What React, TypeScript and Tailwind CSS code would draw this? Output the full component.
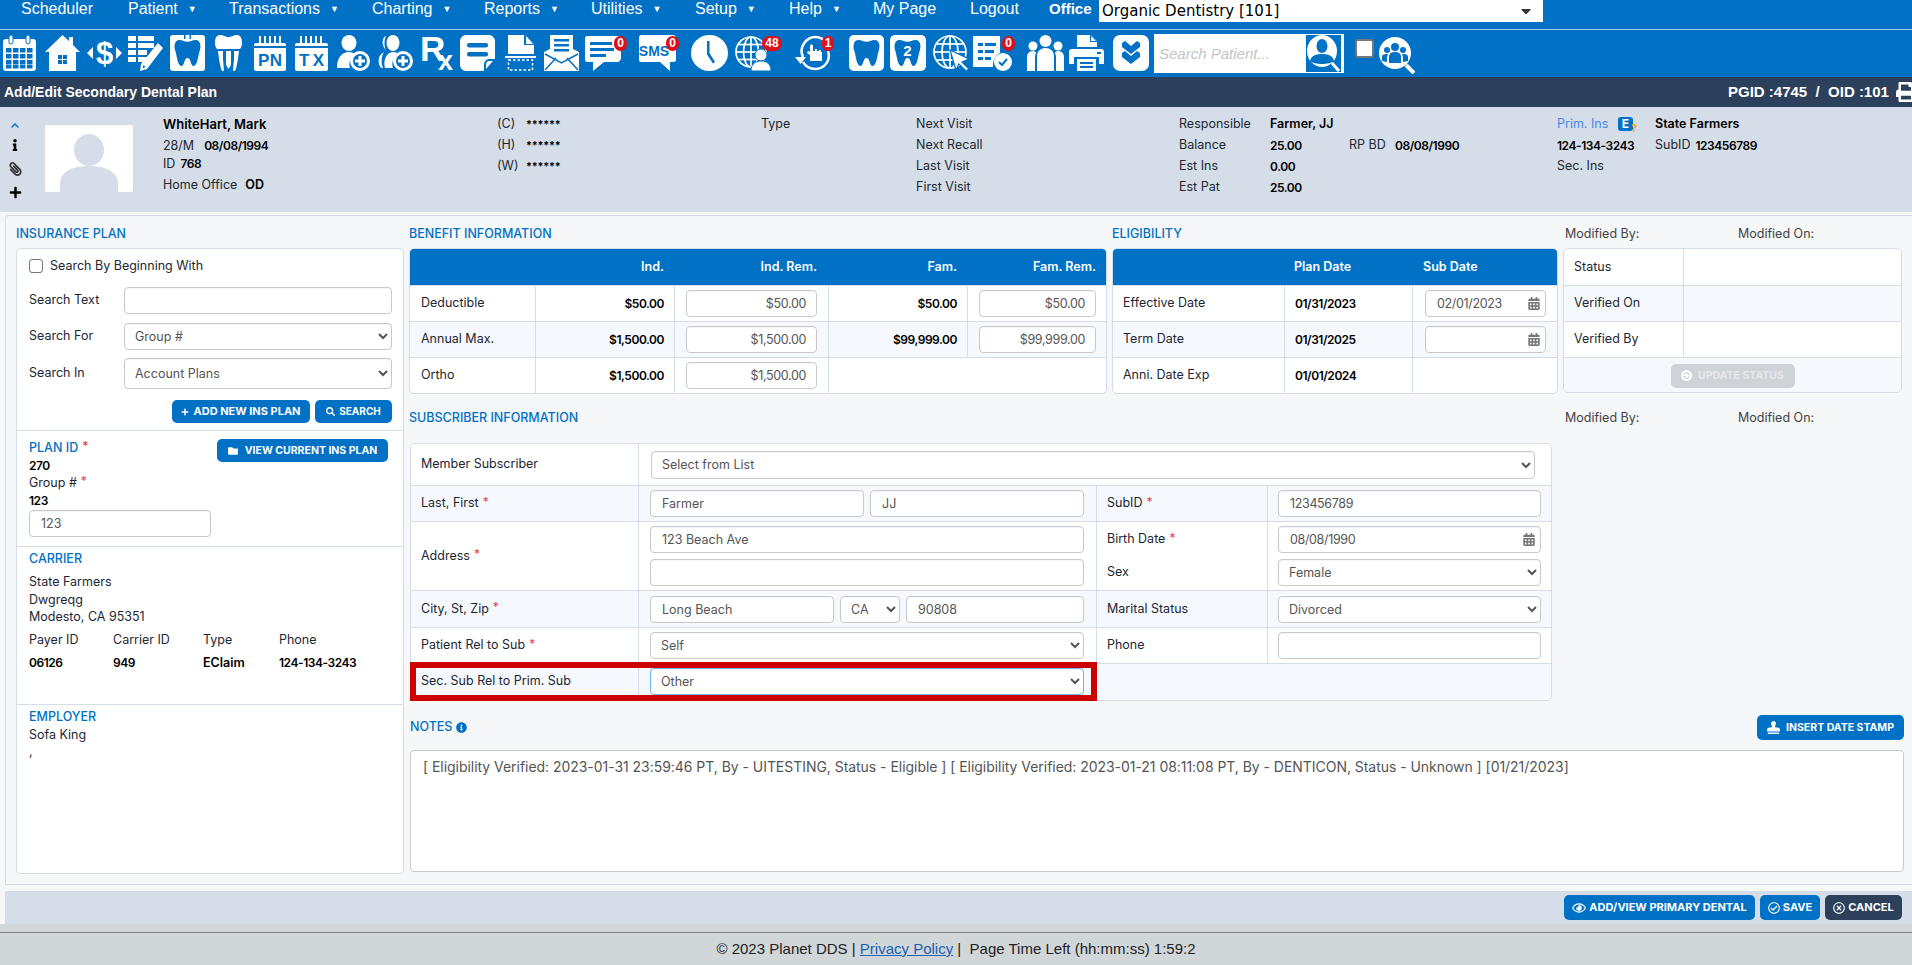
import React from "react";
import {
  FaInfo, FaPaperclip, FaPlus, FaSearch, FaFolder, FaRegEye, FaRegCheckCircle, FaRegTimesCircle,
  FaStamp, FaCalendarAlt, FaInfoCircle, FaPrint, FaCaretDown, FaChevronUp, FaSyncAlt,
} from "react-icons/fa";

const B = "#0071c5";
const line = "border-[#d5dee8]";
const num = "font-semibold text-black text-[12px] tracking-[-0.45px]";
const inNum = "tracking-[-0.35px]";

function Ic({ w, cls, children }: { w: number; cls: string; children: React.ReactNode }) {
  return (
    <svg viewBox={`0 0 ${w} 36`} className={`h-[36px] shrink-0 ${cls}`} fill="white">
      {children}
    </svg>
  );
}

const toothPath =
  "M9.5 5C4.5 5 3.5 11 5.5 16.500C7 21 7.500 31 11.500 31C14.500 31 14 23 17.500 23C21 23 20.500 31 23.500 31C27.500 31 28 21 29.500 16.500C31.500 11 30.500 5 25.500 5C22 5 21 6.800 17.500 6.800C14 6.800 13 5 9.500 5Z";

function Badge({ n, cls }: { n: string; cls: string }) {
  return (
    <span className={`absolute h-[15px] rounded-full bg-[#e0101a] text-white text-[12px] leading-[15px] font-bold text-center font-['Liberation_Sans',sans-serif] ${cls}`}>
      {n}
    </span>
  );
}

function Pad({ t, w, cls }: { t: string; w: number; cls: string }) {
  return (
    <Ic w={w} cls={cls}>
      <rect x="0" y="8" width={w} height="28" rx="2" />
      <rect x="5" y="1" width="2" height="10" />
      <rect x="10" y="1" width="2" height="10" />
      <rect x="15" y="1" width="2" height="10" />
      <rect x="20" y="1" width="2" height="10" />
      <rect x="25" y="1" width="2" height="10" />
      <rect x="0" y="11" width={w} height="2" fill={B} />
      <text x={w / 2} y="31" textAnchor="middle" fontSize="17" fontWeight="700" fontFamily="Liberation Sans, sans-serif" fill={B} textLength={w - 8}>
        {t}
      </text>
    </Ic>
  );
}

function GlobeLines({ cx, cy, r }: { cx: number; cy: number; r: number }) {
  return (
    <g fill="none" stroke="white" strokeWidth="1.700">
      <circle cx={cx} cy={cy} r={r} />
      <ellipse cx={cx} cy={cy} rx={r * 0.5} ry={r} />
      <line x1={cx} y1={cy - r} x2={cx} y2={cy + r} />
      <line x1={cx - r} y1={cy} x2={cx + r} y2={cy} />
      <line x1={cx - r * 0.85} y1={cy - r * 0.5} x2={cx + r * 0.85} y2={cy - r * 0.5} />
      <line x1={cx - r * 0.85} y1={cy + r * 0.5} x2={cx + r * 0.85} y2={cy + r * 0.5} />
    </g>
  );
}

function Toolbar() {
  return (
    <div className="h-[47px] pt-[5px] pl-[3px] flex items-start bg-[#0071c5]">
      {/* calendar */}
      <Ic w={33} cls="w-[33px]">
        <rect x="0" y="4" width="33" height="32" rx="3" />
        <rect x="6" y="0" width="4" height="9" rx="2" stroke={B} strokeWidth="1" />
        <rect x="23" y="0" width="4" height="9" rx="2" stroke={B} strokeWidth="1" />
        <g fill={B}>
          {[13, 19, 25, 30].map((y) =>
            [3, 10, 17, 24].map((x) => <rect key={`${x}-${y}`} x={x} y={y} width="5.500" height={y === 30 ? 3.500 : 4.500} />),
          )}
        </g>
      </Ic>
      {/* home */}
      <Ic w={35} cls="w-[35px] ml-[9px]">
        <path d="M17.500 0L24 6V2H28V10L35 17H31V36H4V17H0Z" />
        <path fill={B} d="M13 20H22V29H13Z" />
        <path d="M17 20H18V29H17ZM13 24H22V25H13Z" />
      </Ic>
      {/* dollar */}
      <Ic w={35} cls="w-[35px] ml-[7px]">
        <text x="17.500" y="29" textAnchor="middle" fontSize="31" fontWeight="700" fontFamily="Liberation Sans, sans-serif">$</text>
        <path d="M0 18L6 12V24ZM35 18L29 12V24Z" />
      </Ic>
      {/* checklist + pencil */}
      <Ic w={35} cls="w-[35px] ml-[6px]">
        {[1, 8, 15, 22].map((y) => (
          <g key={y}>
            <rect x="0" y={y} width="8" height="5" />
            <rect x="10" y={y} width={y > 10 ? 9 : 16} height="5" />
          </g>
        ))}
        <path d="M30 8L35 13L19 34L12 36L13 29Z" />
        <path fill={B} d="M15.500 30L17.500 32L14.500 33.500Z" />
      </Ic>
      {/* tooth box */}
      <Ic w={35} cls="w-[35px] ml-[7px]">
        <rect x="0" y="0" width="35" height="36" rx="3" />
        <path fill={B} d={toothPath} />
        <rect x="14" y="0" width="1.500" height="4" fill={B} />
        <rect x="19.500" y="0" width="1.500" height="4" fill={B} />
      </Ic>
      {/* implant */}
      <Ic w={27} cls="w-[27px] ml-[10px]">
        <path d="M5 0C9 0 10 2 13.500 2C17 2 18 0 22 0C26 0 27 4 27 8C27 11 26 13 25 14H2C1 13 0 11 0 8C0 4 1 0 5 0Z" />
        <path d="M3 16H8V24L9 36H7C5 32 4 24 3 16ZM24 16H19V24L18 36H20C22 32 23 24 24 16Z" />
        <path d="M11 16H16V30L13.500 34L11 30Z" />
      </Ic>
      <Pad t="PN" w={32} cls="w-[32px] ml-[12px]" />
      <Pad t="TX" w={33} cls="w-[33px] ml-[9px]" />
      {/* user plus */}
      <Ic w={33} cls="w-[33px] ml-[9px]">
        <ellipse cx="12" cy="8" rx="7.500" ry="8" />
        <path d="M0 32C0 24 4 17 12 17C15 17 17 18 19 20C14 22 11 27 13 33H2C1 33 0 33 0 32Z" />
        <circle cx="23" cy="26" r="8.500" fill="none" stroke="white" strokeWidth="3" />
        <path d="M21.500 21H24.500V24.500H28V27.500H24.500V31H21.500V27.500H18V24.500H21.500Z" />
      </Ic>
      {/* users plus */}
      <Ic w={35} cls="w-[35px] ml-[8px]">
        <ellipse cx="15" cy="8" rx="6.500" ry="8" />
        <path d="M8 1C5 2 4 6 5 10C6 13 7 14 8 15C6 12 6 5 8 1Z" />
        <path d="M3 33C-1 28 0 20 6 17C3 22 3 28 5 33Z" />
        <path d="M7 33C5 26 8 17 15 17C18 17 20 18 21 20C16 22 13 27 15 33Z" />
        <circle cx="25" cy="26" r="8.500" fill="none" stroke="white" strokeWidth="3" />
        <path d="M23.500 21H26.500V24.500H30V27.500H26.500V31H23.500V27.500H20V24.500H23.500Z" />
      </Ic>
      {/* Rx */}
      <Ic w={33} cls="w-[33px] ml-[7px] overflow-visible">
        <text x="0" y="26" fontSize="35" fontWeight="700" fontFamily="Liberation Sans, sans-serif">R</text>
        <text x="18" y="35" fontSize="27" fontWeight="700" fontFamily="Liberation Sans, sans-serif">x</text>
      </Ic>
      {/* note */}
      <Ic w={35} cls="w-[35px] ml-[7px]">
        <path d="M6 0H29C32 0 35 3 35 6V24L24 36H6C3 36 0 33 0 30V6C0 3 3 0 6 0Z" />
        <rect x="7" y="8" width="21" height="4.500" rx="2" fill={B} />
        <rect x="7" y="17" width="21" height="4.500" rx="2" fill={B} />
        <path fill={B} d="M35 24V26L26 36H24V30C24 27 26 24 29 24Z" />
        <path d="M33 26L26 34V30C26 28 27 26 29 26Z" />
      </Ic>
      {/* scan */}
      <Ic w={31} cls="w-[31px] ml-[10px]">
        <path d="M3 0H20L29 9V19H3Z" />
        <path fill={B} d="M19 0H20L29 9V10H19Z" />
        <path d="M21 1L28 9H21Z" />
        <rect x="0" y="21" width="31" height="2" />
        <rect x="3.500" y="25" width="24" height="10" fill="none" stroke="white" strokeWidth="1.500" strokeDasharray="2.500 2" />
      </Ic>
      {/* mail */}
      <Ic w={35} cls="w-[35px] ml-[8px]">
        <path d="M6 0H29V14L35 17V36H0V17L6 14Z" />
        <rect x="10" y="4" width="15" height="2.500" fill={B} />
        <rect x="10" y="9" width="15" height="2.500" fill={B} />
        <rect x="10" y="14" width="15" height="2.500" fill={B} />
        <path fill="none" stroke={B} strokeWidth="1.500" d="M1 19L17.500 28L34 19M1 35L12 23M34 35L23 23" />
      </Ic>
      {/* chat */}
      <div className="relative ml-[6px] w-[40px] h-[36px] shrink-0">
        <Ic w={40} cls="w-[40px]">
          <path d="M2 1H32C34 1 36 3 36 5V23C36 25 34 27 32 27H19L8 36V27H2C1 27 0 26 0 24V3C0 2 1 1 2 1Z" />
          <rect x="5" y="7" width="22" height="3" fill={B} />
          <rect x="5" y="13" width="24" height="3" fill={B} />
          <rect x="5" y="19" width="16" height="3" fill={B} />
        </Ic>
        <Badge n="0" cls="w-[13px] left-[29px] top-[1px]" />
      </div>
      {/* SMS */}
      <div className="relative ml-[14px] w-[40px] h-[36px] shrink-0">
        <Ic w={40} cls="w-[40px]">
          <path d="M2 0H34C35 0 37 1 37 3V25C37 26 36 27 34 27H31V36L21 27H2C1 27 0 26 0 25V3C0 1 1 0 2 0Z" />
          <text x="15" y="21" textAnchor="middle" fontSize="14" fontWeight="700" fontFamily="Liberation Sans, sans-serif" fill={B}>SMS</text>
        </Ic>
        <Badge n="0" cls="w-[13px] left-[27px] top-[1px]" />
      </div>
      {/* clock */}
      <Ic w={37} cls="w-[37px] ml-[12px]">
        <ellipse cx="18.500" cy="18" rx="18.500" ry="18" />
        <path d="M16 6H18.500V18L24 27L22 28.500L16 19.500Z" fill={B} />
      </Ic>
      {/* globe user */}
      <div className="relative ml-[7px] w-[46px] h-[36px] shrink-0">
        <Ic w={46} cls="w-[46px]">
          <GlobeLines cx={16} cy={17} r={15} />
          <circle cx="26" cy="20" r="6" stroke={B} strokeWidth="1" />
          <path d="M16 36C16 29 20 26 26 26C32 26 36 29 36 36Z" stroke={B} strokeWidth="1" />
        </Ic>
        <Badge n="48" cls="w-[20px] left-[27px] top-[1px]" />
      </div>
      {/* history */}
      <div className="relative ml-[14px] w-[40px] h-[36px] shrink-0">
        <Ic w={40} cls="w-[40px]">
          <path fill="none" stroke="white" strokeWidth="2.500" d="M8 22C3 12 12 2 20 2C25 2 29 4 32 8M33 16C36 25 30 34 20 34C15 34 10 31 8 27" />
          <path d="M0 22H11L5.500 29Z" />
          <path d="M15 11C15 9 18 9 18 11V16H20V14H22V16H24V15H26V17H27V26H15V20L12 18L13 16L15 17Z" />
        </Ic>
        <Badge n="1" cls="w-[12px] left-[27px] top-[1px]" />
      </div>
      {/* teeth */}
      <Ic w={35} cls="w-[35px] ml-[14px]">
        <rect x="0" y="0" width="35" height="36" rx="5" />
        <path fill={B} d={toothPath} />
      </Ic>
      <Ic w={36} cls="w-[36px] ml-[6px]">
        <rect x="0" y="0" width="36" height="36" rx="5" />
        <path fill={B} d={toothPath} />
        <text x="17.500" y="21" textAnchor="middle" fontSize="15" fontWeight="700" fontFamily="Liberation Sans, sans-serif">2</text>
      </Ic>
      {/* globe cursor */}
      <Ic w={36} cls="w-[36px] ml-[7px]">
        <GlobeLines cx={17} cy={17} r={16} />
        <path d="M17 15L36 24L29 27L36 34L33 36L26 29L23 35Z" stroke={B} strokeWidth="1.200" />
      </Ic>
      {/* doc check */}
      <div className="relative ml-[4px] w-[42px] h-[36px] shrink-0">
        <Ic w={42} cls="w-[42px]">
          <path d="M0 1H27V18C24 19 20 24 20 30V32H0Z" />
          <g fill={B}>
            <rect x="5" y="8" width="5" height="3" />
            <rect x="12" y="8" width="11" height="3" />
            <rect x="5" y="15" width="5" height="3" />
            <rect x="12" y="15" width="9" height="3" />
            <rect x="5" y="22" width="5" height="3" />
            <rect x="12" y="22" width="6" height="3" />
          </g>
          <circle cx="30" cy="27" r="9" />
          <path fill="none" stroke={B} strokeWidth="2" d="M26 27L29 30L34 24" />
        </Ic>
        <Badge n="0" cls="w-[13px] left-[29px] top-[1px]" />
      </div>
      {/* people */}
      <Ic w={37} cls="w-[37px] ml-[12px]">
        <circle cx="18.500" cy="6" r="6" />
        <circle cx="6" cy="11" r="4.500" />
        <circle cx="31" cy="11" r="4.500" />
        <path d="M10 36V21C10 16 14 13 18.500 13C23 13 27 16 27 21V36Z" />
        <path d="M0 36V22C0 18 3 16 6 16C8 16 9 17 9 18C8 20 8 22 8 24V36ZM37 36V22C37 18 34 16 31 16C29 16 28 17 28 18C29 20 29 22 29 24V36Z" />
      </Ic>
      {/* printer */}
      <Ic w={35} cls="w-[35px] ml-[5px]">
        <path d="M8 0H22L28 6V12H8Z" />
        <path fill={B} d="M21 0H22L28 6V7H21Z" />
        <path d="M22 1L27 6H22Z" />
        <path d="M3 14H32C34 14 35 15 35 17V29H30V22H5V29H0V17C0 15 1 14 3 14Z" />
        <path d="M8 24H27V36H8Z" />
        <rect x="11" y="27" width="13" height="2" fill={B} />
        <rect x="11" y="31" width="13" height="2" fill={B} />
        <rect x="28" y="17" width="4" height="2" fill={B} />
      </Ic>
      {/* chevrons */}
      <Ic w={36} cls="w-[36px] ml-[9px]">
        <rect x="0" y="0" width="36" height="36" rx="7" />
        <path fill={B} d="M9 8L12 6L18 11L24 6L27 8V12L18 19L9 12Z" />
        <path fill={B} d="M9 18L12 16L18 21L24 16L27 18V22L18 29L9 22Z" />
      </Ic>
      {/* search box */}
      <div className="ml-[5px] -mt-[1px] w-[190px] h-[39px] bg-white border border-white flex shrink-0">
        <input
          readOnly
          placeholder="Search Patient..."
          className="w-[151px] h-full pl-[4px] bg-white outline-none italic text-[15px] placeholder:text-[#c4c4c4] font-['Liberation_Sans',sans-serif]"
        />
        <svg viewBox="0 0 35 37" className="w-[35px] h-[37px] shrink-0">
          <rect width="35" height="37" fill={B} />
          <ellipse cx="16" cy="16" rx="15" ry="16" fill="white" />
          <ellipse cx="16" cy="11" rx="5.500" ry="7" fill={B} />
          <path fill={B} d="M4 26C5 20 11 19 16 19C21 19 27 20 28 26C24 30 8 30 4 26Z" />
          <path stroke="white" strokeWidth="3" d="M26 28L33 36" />
        </svg>
      </div>
      <input type="checkbox" readOnly className="ml-[11px] mt-[4px] w-[19px] h-[19px] shrink-0 appearance-none bg-white rounded-[3px] border-2 border-[#767676]" />
      {/* group search */}
      <svg viewBox="0 0 36 37" className="ml-[5px] mt-[2px] w-[36px] h-[37px] shrink-0">
        <circle cx="16" cy="16" r="16" fill="white" />
        <g fill={B}>
          <circle cx="16" cy="10" r="4" />
          <circle cx="8" cy="13" r="3" />
          <circle cx="24" cy="13" r="3" />
          <path d="M10 26V20C10 16 13 15 16 15C19 15 22 16 22 20V26Z" />
          <path d="M3 24V20C3 17 6 17 9 17C8 19 8 21 8 25ZM29 24V20C29 17 26 17 23 17C24 19 24 21 24 25Z" />
        </g>
        <path stroke="white" strokeWidth="4" d="M27 28L35 36" />
      </svg>
    </div>
  );
}

function Nav() {
  const cls = "shrink-0 leading-[17px] text-[16px]";
  const Caret = () => <span className="text-[9px] ml-[10px] align-[2px]">▼</span>;
  return (
    <div className="h-[30px] bg-[#0071c5] border-b border-[#a9cde9] flex items-start pl-[21px] text-white font-['Liberation_Sans',sans-serif]">
      <div className={`${cls} w-[107px]`}>Scheduler</div>
      <div className={`${cls} w-[101px]`}>Patient<Caret /></div>
      <div className={`${cls} w-[143px]`}>Transactions<Caret /></div>
      <div className={`${cls} w-[112px]`}>Charting<Caret /></div>
      <div className={`${cls} w-[107px]`}>Reports<Caret /></div>
      <div className={`${cls} w-[104px]`}>Utilities<Caret /></div>
      <div className={`${cls} w-[94px]`}>Setup<Caret /></div>
      <div className={`${cls} w-[84px]`}>Help<Caret /></div>
      <div className={`${cls} w-[97px]`}>My Page</div>
      <div className={`${cls} w-[79px]`}>Logout</div>
      <div className="shrink-0 leading-[17px] text-[15px] w-[50px] font-bold">Office</div>
      <div className="w-[444px] h-[22px] bg-white text-black flex items-center justify-between pl-[3px] pr-[9px] text-[15px] font-['DejaVu_Sans',sans-serif]">
        <span>Organic Dentistry [101]</span>
        <FaCaretDown className="text-[#333] text-[16px]" />
      </div>
    </div>
  );
}

function DarkBar() {
  return (
    <div className="h-[30px] bg-[#2c405c] flex items-center text-white font-bold font-['Liberation_Sans',sans-serif] overflow-hidden">
      <div className="w-[1728px] pl-[4px] shrink-0 text-[14px]">Add/Edit Secondary Dental Plan</div>
      <div className="w-[168px] shrink-0 text-[15px] whitespace-pre">PGID :4745  /  OID :101</div>
      <FaPrint className="shrink-0 w-[20px] h-[20px] text-white" />
    </div>
  );
}

function PatientHeader() {
  const r = "h-[21px] flex items-center whitespace-nowrap";
  const v = "font-semibold text-black";
  const star = "font-semibold text-black text-[11px] tracking-[-0.2px]";
  return (
    <div className="h-[105px] bg-[#d5dee8] flex text-[12.500px] text-[#1d2733] font-['Inter',sans-serif]">
      <div className="w-[45px] shrink-0 pl-[9px] pt-[13px] flex flex-col items-start">
        <FaChevronUp className="text-[#0071c5] w-[12px] h-[9px] mt-[1px]" />
        <FaInfo className="text-black w-[12px] h-[12px] mt-[9px]" />
        <FaPaperclip className="text-[#333] w-[13px] h-[14px] mt-[11px] -scale-x-100" />
        <FaPlus className="text-black w-[13px] h-[13px] mt-[10px]" />
      </div>
      <div className="w-[88px] h-[67px] mt-[18px] bg-white rounded-[2px] shrink-0 flex items-end justify-center">
        <svg viewBox="0 0 60 60" className="w-[60px] h-[60px]">
          <ellipse cx="30" cy="18" rx="15" ry="16" fill="#d5dee8" />
          <path fill="#d5dee8" d="M1 60V50C3 38 15 34 30 34C45 34 57 38 59 50V60Z" />
        </svg>
      </div>
      <div className="w-[30px] shrink-0" />
      <div className="w-[334px] shrink-0 pt-[7px]">
        <div className="h-[21px] flex items-center whitespace-nowrap font-semibold text-black text-[13px]">WhiteHart, Mark</div>
        <div className="h-[22px] flex items-center whitespace-nowrap">28/M<span className={`${num} ml-[10px]`}>08/08/1994</span></div>
        <div className="h-[14px] flex items-center whitespace-nowrap">ID<span className={`${num} ml-[5px]`}>768</span></div>
        <div className="h-[28px] flex items-center whitespace-nowrap">Home Office<span className={`${v} ml-[8px]`}>OD</span></div>
      </div>
      <div className="w-[264px] shrink-0 pt-[7px]">
        <div className={r}><span className="w-[29px]">(C)</span><span className={star}>******</span></div>
        <div className={r}><span className="w-[29px]">(H)</span><span className={star}>******</span></div>
        <div className={r}><span className="w-[29px]">(W)</span><span className={star}>******</span></div>
      </div>
      <div className="w-[155px] shrink-0 pt-[7px]"><div className={r}>Type</div></div>
      <div className="w-[263px] shrink-0 pt-[7px]">
        <div className={r}>Next Visit</div>
        <div className={r}>Next Recall</div>
        <div className={r}>Last Visit</div>
        <div className={r}>First Visit</div>
      </div>
      <div className="w-[378px] shrink-0 pt-[7px]">
        <div className={r}><span className="w-[91px]">Responsible</span><span className={v}>Farmer, JJ</span></div>
        <div className={r}><span className="w-[91px]">Balance</span><span className={`${num} w-[79px]`}>25.00</span><span className="w-[46px]">RP BD</span><span className={num}>08/08/1990</span></div>
        <div className={r}><span className="w-[91px]">Est Ins</span><span className={num}>0.00</span></div>
        <div className={r}><span className="w-[91px]">Est Pat</span><span className={num}>25.00</span></div>
      </div>
      <div className="pt-[7px]">
        <div className={r}>
          <span className="w-[61px] text-[#4a86e8]">Prim. Ins</span>
          <span className="relative w-[19px] h-[16px] mr-[18px]">
            <span className="absolute left-0 top-0 w-[15px] h-[14px] bg-[#0071c5] rounded-[3px] text-white text-[12px] leading-[14px] font-bold text-center">E</span>
            <span className="absolute left-[13px] top-[6px] text-[#f5a623] text-[11px] leading-[11px] font-bold">?</span>
          </span>
          <span className={v}>State Farmers</span>
        </div>
        <div className={r}><span className={`${num} w-[98px]`}>124-134-3243</span>SubID<span className={`${num} ml-[5px]`}>123456789</span></div>
        <div className={r}>Sec. Ins</div>
      </div>
    </div>
  );
}

const title = "text-[12.500px] font-medium text-[#0071c5] leading-[16px]";
const cellL = `flex items-center border-l ${line}`;
const inpC = "h-[27px] border border-[#c9c9c9] rounded-[4px] bg-white text-[12.500px] text-[#555] outline-none shadow-[inset_0_1px_1px_rgba(0,0,0,0.04)]";

function Inp({ v = "", cls = "", right = false }: { v?: string; cls?: string; right?: boolean }) {
  return <input readOnly value={v} className={`${inpC} ${right ? `text-right px-[10px] ${inNum}` : "px-[11px]"} ${cls}`} />;
}
function Sel({ v, cls = "" }: { v: string; cls?: string }) {
  return (
    <select defaultValue={v} className={`${inpC} pl-[6px] pr-[1px] ${cls}`}>
      <option>{v}</option>
    </select>
  );
}
function DateInp({ v = "", cls = "" }: { v?: string; cls?: string }) {
  return (
    <div className={`relative ${cls}`}>
      <input readOnly value={v} className={`${inpC} ${inNum} w-full pl-[11px]`} />
      <FaCalendarAlt className="absolute right-[6px] top-[7px] w-[12px] h-[13px] text-[#777]" />
    </div>
  );
}
function Req() {
  return <span className="text-[#e2434b] text-[12px] ml-[4px] relative -top-[2px]">*</span>;
}
function Btn({ cls, children }: { cls: string; children: React.ReactNode }) {
  return (
    <div className={`flex items-center justify-center rounded-[5px] text-white text-[10.500px] font-bold whitespace-nowrap shrink-0 ${cls}`}>
      {children}
    </div>
  );
}

function LeftPanel() {
  const lb = "w-[95px] shrink-0";
  const g = "leading-[17.500px]";
  return (
    <div className="w-[388px] shrink-0">
      <div className={`h-[32px] pt-[10px] ${title}`}>INSURANCE PLAN</div>
      <div className={`h-[626px] border ${line} rounded-[4px] bg-white text-[12.500px] text-[#1d2733]`}>
        <div className={`h-[182px] border-b ${line} pl-[12px] pr-[11px] pt-[10px]`}>
          <div className="h-[14px] flex items-center">
            <input type="checkbox" readOnly className="w-[14px] h-[14px] appearance-none rounded-[3px] border border-[#767676] bg-white" />
            <span className="ml-[7px]">Search By Beginning With</span>
          </div>
          <div className="mt-[14px] flex items-center"><span className={lb}>Search Text</span><Inp cls="w-[269px]" /></div>
          <div className="mt-[9px] flex items-center"><span className={lb}>Search For</span><Sel v="Group #" cls="w-[269px]" /></div>
          <div className="mt-[8px] flex items-center"><span className={lb}>Search In</span><Sel v="Account Plans" cls="w-[269px] h-[31px]" /></div>
          <div className="mt-[11px] flex justify-end gap-[5px]">
            <Btn cls="w-[138px] h-[23px] bg-[#0071c5] gap-[4px] !text-[11px]"><FaPlus className="w-[8px] h-[8px]" />ADD NEW INS PLAN</Btn>
            <Btn cls="w-[77px] h-[23px] bg-[#0071c5] gap-[4px] !text-[10px]"><FaSearch className="w-[9px] h-[9px]" />SEARCH</Btn>
          </div>
        </div>
        <div className={`h-[116px] border-b ${line} pl-[12px] pr-[15px] pt-[8px] flex justify-between`}>
          <div className={`w-[182px] ${g}`}>
            <div className="text-[#0071c5] font-medium">PLAN ID<Req /></div>
            <div className={num}>270</div>
            <div>Group #<Req /></div>
            <div className={num}>123</div>
            <Inp v="123" cls="w-[182px] mt-[1px]" />
          </div>
          <Btn cls="w-[171px] h-[23px] bg-[#0071c5] gap-[7px]"><FaFolder className="w-[10px] h-[10px]" />VIEW CURRENT INS PLAN</Btn>
        </div>
        <div className={`h-[158px] border-b ${line} pl-[12px] pt-[3px]`}>
          <div className="text-[#0071c5] font-medium leading-[18px]">CARRIER</div>
          <div className={`mt-[5px] ${g}`}>
            <div>State Farmers</div>
            <div>Dwgreqg</div>
            <div>Modesto, CA 95351</div>
          </div>
          <div className="mt-[5px] grid grid-cols-[84px_90px_76px_1fr] gap-y-[5px] leading-[18px]">
            <div>Payer ID</div><div>Carrier ID</div><div>Type</div><div>Phone</div>
            <div className={num}>06126</div>
            <div className={num}>949</div>
            <div className="font-semibold text-black">EClaim</div>
            <div className={num}>124-134-3243</div>
          </div>
        </div>
        <div className={`pl-[12px] pt-[3px] ${g}`}>
          <div className="text-[#0071c5] font-medium">EMPLOYER</div>
          <div>Sofa King</div>
          <div>,</div>
        </div>
      </div>
    </div>
  );
}

const rowB = `border-t ${line}`;
const alt = "bg-[#f5f9fd]";
const boxC = `border ${line} rounded-[5px] overflow-hidden bg-white text-[12.500px] text-[#1d2733]`;
const headC = "h-[36px] bg-[#0071c5] text-white font-semibold text-[12.500px] grid items-center";

function Benefit() {
  const cols = "grid-cols-[125px_139px_154px_139px_139px]";
  const R = ({ l, a, b, c, d, shade }: { l: string; a: string; b: string; c?: string; d?: string; shade?: boolean }) => (
    <div className={`h-[36px] grid ${cols} ${rowB} ${shade ? alt : ""}`}>
      <div className="flex items-center pl-[11px]">{l}</div>
      <div className={`${cellL} justify-end pr-[10px] ${num}`}>{a}</div>
      <div className={`${cellL} pl-[11px]`}><Inp v={b} right cls="w-[131px]" /></div>
      <div className={`${cellL} justify-end pr-[10px] ${num}`}>{c}</div>
      <div className={`${c ? cellL : "flex items-center"} pl-[11px]`}>{d && <Inp v={d} right cls="w-[117px]" />}</div>
    </div>
  );
  return (
    <div className={`w-[698px] h-[146px] ${boxC}`}>
      <div className={`${headC} ${cols} text-right`}>
        <div />
        <div className="pr-[10px]">Ind.</div>
        <div className="pr-[11px]">Ind. Rem.</div>
        <div className="pr-[10px]">Fam.</div>
        <div className="pr-[10px]">Fam. Rem.</div>
      </div>
      <R l="Deductible" a="$50.00" b="$50.00" c="$50.00" d="$50.00" />
      <R l="Annual Max." a="$1,500.00" b="$1,500.00" c="$99,999.00" d="$99,999.00" shade />
      <div className={`h-[36px] grid ${cols} ${rowB}`}>
        <div className="flex items-center pl-[11px]">Ortho</div>
        <div className={`${cellL} justify-end pr-[10px] ${num}`}>$1,500.00</div>
        <div className={`${cellL} pl-[11px]`}><Inp v="$1,500.00" right cls="w-[131px]" /></div>
        <div className={`${cellL}`} />
        <div />
      </div>
    </div>
  );
}

function Eligibility() {
  const cols = "grid-cols-[171px_128px_145px]";
  return (
    <div className={`w-[446px] h-[146px] ${boxC}`}>
      <div className={`${headC} ${cols}`}>
        <div />
        <div className="pl-[10px]">Plan Date</div>
        <div className="pl-[11px]">Sub Date</div>
      </div>
      <div className={`h-[36px] grid ${cols} ${rowB}`}>
        <div className="flex items-center pl-[10px]">Effective Date</div>
        <div className={`${cellL} pl-[10px] ${num}`}>01/31/2023</div>
        <div className={`${cellL} pl-[12px]`}><DateInp v="02/01/2023" cls="w-[121px]" /></div>
      </div>
      <div className={`h-[36px] grid ${cols} ${rowB} ${alt}`}>
        <div className="flex items-center pl-[10px]">Term Date</div>
        <div className={`${cellL} pl-[10px] ${num}`}>01/31/2025</div>
        <div className={`${cellL} pl-[12px]`}><DateInp cls="w-[121px]" /></div>
      </div>
      <div className={`h-[36px] grid ${cols} ${rowB}`}>
        <div className="flex items-center pl-[10px]">Anni. Date Exp</div>
        <div className={`${cellL} pl-[10px] ${num}`}>01/01/2024</div>
        <div className={cellL} />
      </div>
    </div>
  );
}

function StatusBox() {
  const cols = "grid-cols-[119px_218px]";
  return (
    <div className={`w-[339px] h-[145px] ${boxC}`}>
      <div className={`h-[36px] grid ${cols}`}>
        <div className="flex items-center pl-[10px]">Status</div><div className={cellL} />
      </div>
      <div className={`h-[36px] grid ${cols} ${rowB} ${alt}`}>
        <div className="flex items-center pl-[10px]">Verified On</div><div className={cellL} />
      </div>
      <div className={`h-[36px] grid ${cols} ${rowB}`}>
        <div className="flex items-center pl-[10px]">Verified By</div><div className={cellL} />
      </div>
      <div className={`h-[35px] ${rowB} ${alt} flex items-center justify-center pt-[1px]`}>
        <Btn cls="w-[124px] h-[24px] bg-[#ced3d8] gap-[6px] !text-[#e6e8ea]">
          <FaSyncAlt className="w-[11px] h-[11px] p-[2px] bg-white rounded-full text-[#ced3d8]" />UPDATE STATUS
        </Btn>
      </div>
    </div>
  );
}

function Subscriber() {
  const cols = "grid-cols-[227px_458px_171px_284px]";
  const c2 = `${cellL} pl-[11px] gap-[6px]`;
  const c3 = `${cellL} pl-[10px]`;
  const c4 = `${cellL} pl-[10px]`;
  return (
    <div className="relative w-[1142px] h-[258px]">
      <div className={`h-[258px] ${boxC}`}>
        <div className="h-[41px] grid grid-cols-[227px_913px]">
          <div className="flex items-center pl-[10px]">Member Subscriber</div>
          <div className={`${cellL} pl-[12px]`}><Sel v="Select from List" cls="w-[884px] h-[28px]" /></div>
        </div>
        <div className={`h-[36px] grid ${cols} ${rowB} ${alt}`}>
          <div className="flex items-center pl-[10px]">Last, First<Req /></div>
          <div className={c2}><Inp v="Farmer" cls="w-[214px]" /><Inp v="JJ" cls="w-[214px]" /></div>
          <div className={c3}>SubID<Req /></div>
          <div className={c4}><Inp v="123456789" cls={`w-[263px] ${inNum}`} /></div>
        </div>
        <div className={`h-[69px] grid ${cols} ${rowB}`}>
          <div className="flex items-center pl-[10px]">Address<Req /></div>
          <div className={`${cellL} pl-[11px] flex-col items-start justify-center gap-[6px]`}>
            <Inp v="123 Beach Ave" cls="w-[434px]" />
            <Inp cls="w-[434px]" />
          </div>
          <div className={`${cellL} pl-[10px] flex-col items-start justify-center gap-[6px]`}>
            <div className="h-[27px] flex items-center">Birth Date<Req /></div>
            <div className="h-[27px] flex items-center">Sex</div>
          </div>
          <div className={`${cellL} pl-[10px] flex-col items-start justify-center gap-[6px]`}>
            <DateInp v="08/08/1990" cls="w-[263px]" />
            <Sel v="Female" cls="w-[263px]" />
          </div>
        </div>
        <div className={`h-[37px] grid ${cols} ${rowB} ${alt}`}>
          <div className="flex items-center pl-[10px]">City, St, Zip<Req /></div>
          <div className={c2}><Inp v="Long Beach" cls="w-[184px]" /><Sel v="CA" cls="w-[60px]" /><Inp v="90808" cls="w-[178px]" /></div>
          <div className={c3}>Marital Status</div>
          <div className={c4}><Sel v="Divorced" cls="w-[263px]" /></div>
        </div>
        <div className={`h-[36px] grid ${cols} ${rowB}`}>
          <div className="flex items-center pl-[10px]">Patient Rel to Sub<Req /></div>
          <div className={c2}><Sel v="Self" cls="w-[434px]" /></div>
          <div className={c3}>Phone</div>
          <div className={c4}><Inp cls="w-[263px]" /></div>
        </div>
        <div className={`h-[36px] grid grid-cols-[227px_458px_455px] ${rowB} ${alt}`}>
          <div className="flex items-center pl-[10px]">Sec. Sub Rel to Prim. Sub</div>
          <div className={c2}><Sel v="Other" cls="w-[434px] !border-[#6fb3ea]" /></div>
          <div />
        </div>
      </div>
      <div className="absolute left-0 top-[219px] w-[687px] h-[39px] border-[6px] border-[#cc0000] pointer-events-none" />
    </div>
  );
}

function Main() {
  return (
    <div className={`ml-[5px] h-[670px] bg-[#f5f7f9] border-t border-b border-l ${line} rounded-tl-[4px] flex pl-[10px] font-['Inter',sans-serif]`}>
      <LeftPanel />
      <div className="ml-[5px] flex-1 min-w-0">
        <div className="flex gap-[5px]">
          <div className="w-[698px]">
            <div className={`h-[32px] pt-[10px] ${title}`}>BENEFIT INFORMATION</div>
            <Benefit />
          </div>
          <div className="w-[446px]">
            <div className={`h-[32px] pt-[10px] ${title}`}>ELIGIBILITY</div>
            <Eligibility />
          </div>
          <div className="w-[339px]">
            <div className="h-[32px] pt-[10px] pl-[2px] flex text-[12.500px] leading-[16px] text-[#444]">
              <span className="w-[173px]">Modified By:</span><span>Modified On:</span>
            </div>
            <StatusBox />
          </div>
        </div>
        <div className="h-[49px] pt-[16px] flex">
          <div className={`w-[1156px] ${title}`}>SUBSCRIBER INFORMATION</div>
          <div className="flex text-[12.500px] leading-[16px] text-[#444]">
            <span className="w-[173px]">Modified By:</span><span>Modified On:</span>
          </div>
        </div>
        <div className="pl-[1px]"><Subscriber /></div>
        <div className="h-[49px] pl-[1px] pr-[8px] flex justify-between items-start pt-[14px]">
          <div className={`${title} flex items-center gap-[4px] mt-[4px]`}>NOTES<FaInfoCircle className="w-[11px] h-[11px]" /></div>
          <Btn cls="w-[147px] h-[25px] bg-[#0071c5] gap-[6px]"><FaStamp className="w-[13px] h-[13px]" />INSERT DATE STAMP</Btn>
        </div>
        <div className="ml-[1px] mr-[8px] h-[122px] bg-white border border-[#c9c9c9] rounded-[4px] px-[12px] pt-[6px] text-[14px] tracking-[-0.04px] leading-[20px] text-[#555] whitespace-nowrap overflow-hidden">
          [ Eligibility Verified: 2023-01-31 23:59:46 PT, By - UITESTING, Status - Eligible ] [ Eligibility Verified: 2023-01-21 08:11:08 PT, By - DENTICON, Status - Unknown ] [01/21/2023]
        </div>
      </div>
    </div>
  );
}

export default function App() {
  return (
    <div className="w-[1912px] h-[965px] overflow-hidden bg-[#f5f7f9] flex flex-col">
      <Nav />
      <Toolbar />
      <DarkBar />
      <PatientHeader />
      <div className="h-[3px]" />
      <Main />
      <div className="h-[6px]" />
      <div className="ml-[5px] h-[33px] bg-[#d5dee8] flex items-center justify-end gap-[5px] pr-[10px] font-['Inter',sans-serif]">
        <Btn cls="w-[191px] h-[25px] bg-[#0071c5] gap-[3px] !text-[11px]"><FaRegEye className="w-[14px] h-[14px]" />ADD/VIEW PRIMARY DENTAL</Btn>
        <Btn cls="w-[60px] h-[25px] bg-[#0071c5] gap-[3px] !text-[11px]"><FaRegCheckCircle className="w-[12px] h-[12px]" />SAVE</Btn>
        <Btn cls="w-[77px] h-[25px] bg-[#2c405c] gap-[3px] !text-[11px]"><FaRegTimesCircle className="w-[12px] h-[12px]" />CANCEL</Btn>
      </div>
      <div className="h-[8px] bg-[#d1d6d9]" />
      <div className="flex-1 bg-[#d1d6d9] border-t border-[#808080] flex items-center justify-center text-[15px] text-[#222] font-['Liberation_Sans',sans-serif] whitespace-pre">
        © 2023 Planet DDS | <span className="text-[#1a5fb4] underline">Privacy Policy</span> |  Page Time Left (hh:mm:ss) 1:59:2
      </div>
    </div>
  );
}
